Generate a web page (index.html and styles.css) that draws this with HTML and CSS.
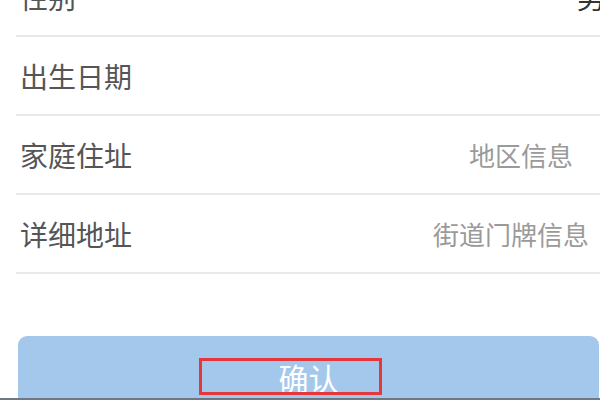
FILE: index.html
```html
<!DOCTYPE html>
<html lang="zh-CN">
<head>
<meta charset="utf-8">
<title>个人信息</title>
<link rel="stylesheet" href="styles.css">
</head>
<body>
<div class="page">
  <div class="form">
    <div class="row">
      <span class="label">性别</span>
      <span class="value value-gender">男</span>
    </div>
    <div class="row">
      <span class="label">出生日期</span>
      <span class="value"></span>
    </div>
    <div class="row">
      <span class="label">家庭住址</span>
      <span class="placeholder placeholder-region">地区信息</span>
    </div>
    <div class="row">
      <span class="label">详细地址</span>
      <span class="placeholder placeholder-street">街道门牌信息</span>
    </div>
  </div>
  <div class="actions">
    <button class="confirm">确认<span class="highlight"></span></button>
  </div>
</div>
<div class="screen-edge"></div>
</body>
</html>
```

FILE: styles.css
```css
html, body {
  margin: 0;
  padding: 0;
  background: #ffffff;
  overflow: hidden;
  height: 400px;
}

.page {
  font-family: "Noto Sans CJK SC", "Noto Sans", sans-serif;
  margin-top: -42px;
}

.form {
  display: flex;
  flex-direction: column;
  margin-left: 16px;
}

.row {
  display: flex;
  align-items: center;
  justify-content: space-between;
  height: 77px;
  border-bottom: 2px solid #e9e9e9;
  padding-left: 4px;
}

.label {
  font-size: 28px;
  line-height: 1;
  color: #555555;
}

.value {
  font-size: 28px;
  line-height: 1;
  color: #333333;
}

.value-gender {
  margin-right: -5px;
}

.placeholder {
  font-size: 26px;
  line-height: 1;
  color: #9a9a9a;
}

.placeholder-region {
  margin-right: 27px;
}

.placeholder-street {
  margin-right: 11px;
}

.actions {
  padding: 62px 1px 0 18px;
}

.confirm {
  position: relative;
  display: flex;
  align-items: center;
  justify-content: center;
  width: 100%;
  height: 82px;
  border: none;
  border-radius: 9px;
  background: #a4c8eb;
  color: #ffffff;
  font-family: "Noto Sans CJK SC", "Noto Sans", sans-serif;
  font-size: 30px;
  line-height: 1;
  padding: 0;
}

.highlight {
  position: absolute;
  left: 181px;
  top: 22px;
  width: 183px;
  height: 37px;
  box-sizing: border-box;
  border: 3px solid #e6373d;
}

.screen-edge {
  position: fixed;
  left: 0;
  right: 0;
  bottom: 0;
  height: 2px;
  background: #6f7882;
}
```
